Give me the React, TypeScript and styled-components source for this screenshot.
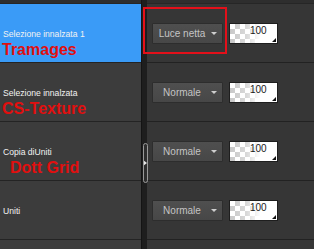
import React from 'react';
import styled, { createGlobalStyle } from 'styled-components';

const GlobalStyle = createGlobalStyle`
  html, body { margin: 0; padding: 0; background: #2c2c2c; }
  body { font-family: "Liberation Sans", Arial, sans-serif; }
`;

type Layer = {
    name: string;
    note: string;
    mode: string;
    selected?: boolean;
    indent?: boolean;
};

const layers: Layer[] = [
    { name: 'Selezione innalzata 1', note: 'Tramages', mode: 'Luce netta', selected: true },
    { name: 'Selezione innalzata', note: 'CS-Texture', mode: 'Normale' },
    { name: 'Copia diUniti', note: 'Dott Grid', mode: 'Normale', indent: true },
    { name: 'Uniti', note: '', mode: 'Normale' },
    { name: '', note: '', mode: '' },
];

function App() {
    return (
        <>
            <GlobalStyle />
            <Panel>
                <NameColumn>
                    <TopStrip />
                    {layers.map((l, i) => (
                        <NameRow key={i} selected={l.selected}>
                            {l.name && <LayerName>{l.name}</LayerName>}
                            {l.note && <Note indent={l.indent}>{l.note}</Note>}
                        </NameRow>
                    ))}
                </NameColumn>
                <Splitter>
                    <Handle>
                        <svg width="4" height="6" viewBox="0 0 4 6">
                            <path d="M0 0 L4 3 L0 6 Z" fill="#e8e8e8" />
                        </svg>
                    </Handle>
                </Splitter>
                <PropsColumn>
                    <TopStrip />
                    {layers.map((l, i) => (
                        <PropsRow key={i}>
                            {l.mode && (
                                <>
                                    <BlendWrap highlighted={l.selected}>
                                        <Dropdown>
                                            <span>{l.mode}</span>
                                            <Arrow />
                                        </Dropdown>
                                    </BlendWrap>
                                    <Opacity>
                                        <OpacityValue>100</OpacityValue>
                                        <Corner />
                                    </Opacity>
                                </>
                            )}
                        </PropsRow>
                    ))}
                </PropsColumn>
            </Panel>
        </>
    );
}

const Panel = styled.div`
    display: flex;
    width: 314px;
    height: 249px;
    overflow: hidden;
    background: #2c2c2c;
`;

const NameColumn = styled.div`
    width: 141px;
    display: flex;
    flex-direction: column;
`;

const TopStrip = styled.div`
    height: 3px;
    flex: none;
    background: #2e2e2e;
    border-bottom: 1px solid #262626;
`;

const NameRow = styled.div<{ selected?: boolean }>`
    height: 59px;
    flex: none;
    box-sizing: border-box;
    display: flex;
    flex-direction: column;
    justify-content: center;
    padding: 3px 0 0 3px;
    background: ${(p) => (p.selected ? '#3a9bf7' : '#3c3c3c')};
    border-bottom: 1px solid #242424;
`;

const LayerName = styled.div`
    font-size: 8.6px;
    line-height: 11px;
    color: #f2f2f2;
    white-space: nowrap;
`;

const Note = styled.div<{ indent?: boolean }>`
    margin: 1px 0 -17px ${(p) => (p.indent ? '7px' : '-1px')};
    height: 17px;
    font-size: 16px;
    line-height: 17px;
    font-weight: 700;
    color: #e10f0f;
    white-space: nowrap;
`;

const Splitter = styled.div`
    position: relative;
    width: 6px;
    flex: none;
    background: #1e1e1e;
    border-left: 1px solid #141414;
    box-sizing: border-box;
`;

const Handle = styled.div`
    position: absolute;
    left: 1px;
    top: 143px;
    width: 5px;
    height: 40px;
    box-sizing: border-box;
    border: 1px solid #9a9a9a;
    border-radius: 3px;
    background: #2e2e2e;
    display: flex;
    align-items: center;
    justify-content: center;
`;

const PropsColumn = styled.div`
    flex: 1;
    display: flex;
    flex-direction: column;
`;

const PropsRow = styled.div`
    height: 59px;
    flex: none;
    box-sizing: border-box;
    display: flex;
    align-items: center;
    gap: 6px;
    padding: 0 0 0 5px;
    background: #363636;
    border-bottom: 1px solid #222;
`;

const BlendWrap = styled.div<{ highlighted?: boolean }>`
    position: relative;
    display: flex;

    &::after {
        content: '';
        display: ${(p) => (p.highlighted ? 'block' : 'none')};
        position: absolute;
        left: -9px;
        top: -16px;
        width: 84px;
        height: 47px;
        border: 2px solid #e3101a;
        box-sizing: border-box;
    }
`;

const Dropdown = styled.div`
    width: 71px;
    height: 21px;
    box-sizing: border-box;
    display: flex;
    align-items: center;
    padding: 0 5px 0 4px;
    background: linear-gradient(#4f4f4f, #474747);
    border: 1px solid #2d2d2d;
    border-radius: 1px;
    color: #c4c4c4;
    font-size: 10px;

    span {
        flex: 1;
        text-align: center;
        white-space: nowrap;
        padding-right: 4px;
    }
`;

const Arrow = styled.div`
    flex: none;
    width: 0;
    height: 0;
    border-left: 3px solid transparent;
    border-right: 3px solid transparent;
    border-top: 3px solid #cfcfcf;
`;

const Opacity = styled.div`
    position: relative;
    width: 49px;
    height: 21px;
    box-sizing: border-box;
    border: 1px solid #1e1e1e;
    background:
        linear-gradient(to right, rgba(255, 255, 255, 0) 0%, rgba(255, 255, 255, 0.3) 35%, #fff 65%),
        repeating-conic-gradient(#c8c8c8 0 25%, #ffffff 0 50%) 0 0 / 10px 10px;
`;

const OpacityValue = styled.div`
    position: absolute;
    left: 20px;
    top: 1px;
    font-size: 10px;
    line-height: 12px;
    color: #1a1a1a;
`;

const Corner = styled.div`
    position: absolute;
    right: 1px;
    bottom: 1px;
    width: 0;
    height: 0;
    border-left: 4px solid transparent;
    border-bottom: 4px solid #111;
`;

export default App;
